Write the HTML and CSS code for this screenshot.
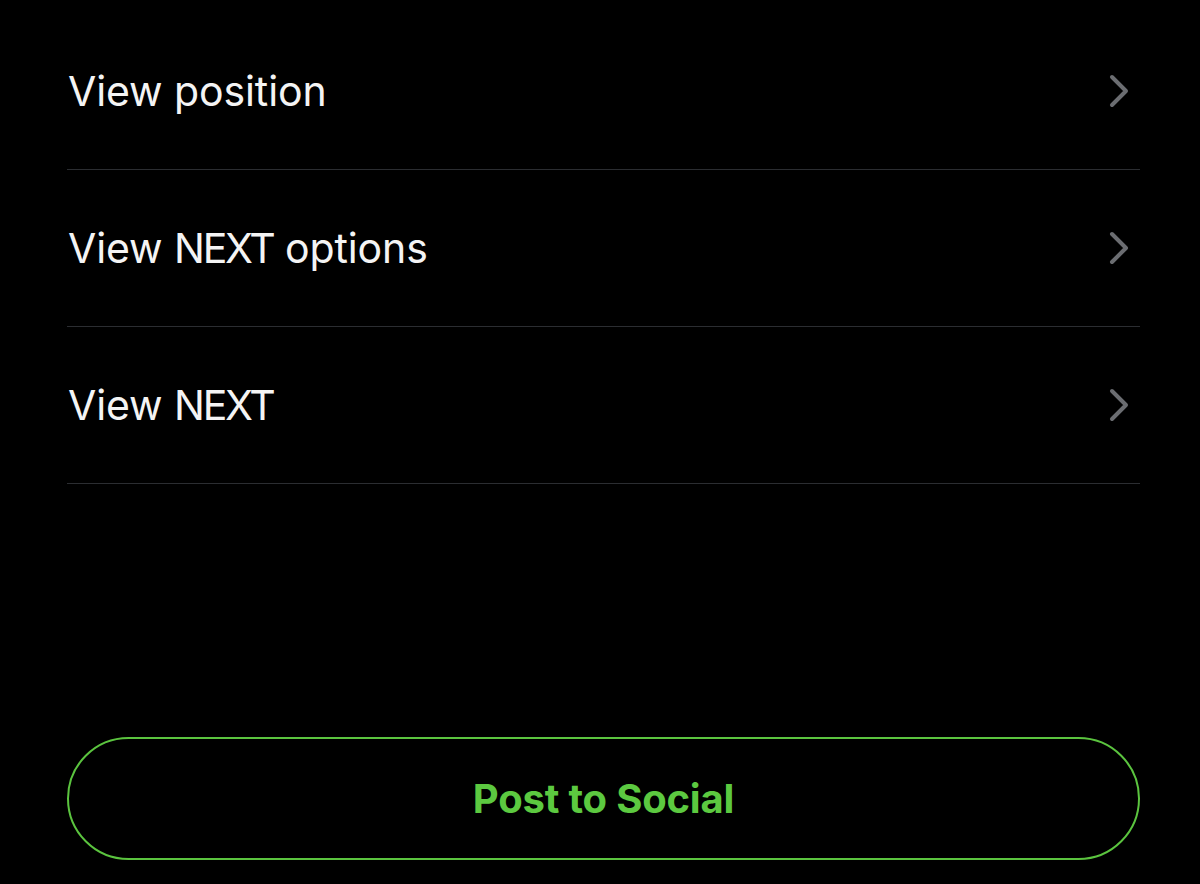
FILE: index.html
```html
<!DOCTYPE html>
<html lang="en">
<head>
<meta charset="utf-8">
<title>Options</title>
<link rel="stylesheet" href="styles.css">
</head>
<body>
<div class="screen">
  <ul class="menu">
    <li class="row"><span class="label">View position</span>
      <svg class="chev" width="26" height="36" viewBox="0 0 26 36"><path d="M6 4 L20 18 L6 32" fill="none" stroke="#6b6d71" stroke-width="4" stroke-linecap="round" stroke-linejoin="round"/></svg></li>
    <li class="row"><span class="label">View <span class="caps">NEXT</span> options</span>
      <svg class="chev" width="26" height="36" viewBox="0 0 26 36"><path d="M6 4 L20 18 L6 32" fill="none" stroke="#6b6d71" stroke-width="4" stroke-linecap="round" stroke-linejoin="round"/></svg></li>
    <li class="row"><span class="label">View <span class="caps">NEXT</span></span>
      <svg class="chev" width="26" height="36" viewBox="0 0 26 36"><path d="M6 4 L20 18 L6 32" fill="none" stroke="#6b6d71" stroke-width="4" stroke-linecap="round" stroke-linejoin="round"/></svg></li>
  </ul>
  <button class="post">Post to Social</button>
</div>
</body>
</html>
```

FILE: styles.css
```css
html, body {
  margin: 0;
  padding: 0;
  background: #000;
}
.screen {
  width: 1200px;
  height: 884px;
  box-sizing: border-box;
  padding: 13px 60px 0 67px;
  display: flex;
  flex-direction: column;
  font-family: Inter, "Noto Sans", sans-serif;
}
.menu {
  list-style: none;
  margin: 0;
  padding: 0;
}
.row {
  height: 156px;
  border-bottom: 1px solid #2b2d31;
  display: flex;
  align-items: center;
  justify-content: space-between;
  padding-right: 8px;
}
.label {
  color: #f4f4f4;
  font-size: 41px;
  font-weight: 400;
  letter-spacing: -0.1px;
  padding-left: 1px;
}
.caps {
  letter-spacing: -2.2px;
}
.chev {
  display: block;
}
.post {
  margin-top: 253px;
  height: 123px;
  width: 100%;
  border: 2px solid #5bc43f;
  border-radius: 62px;
  background: #000;
  color: #5cc940;
  font-family: Inter, "Noto Sans", sans-serif;
  font-size: 40px;
  font-weight: 700;
  letter-spacing: -0.2px;
  padding: 0;
}
```
